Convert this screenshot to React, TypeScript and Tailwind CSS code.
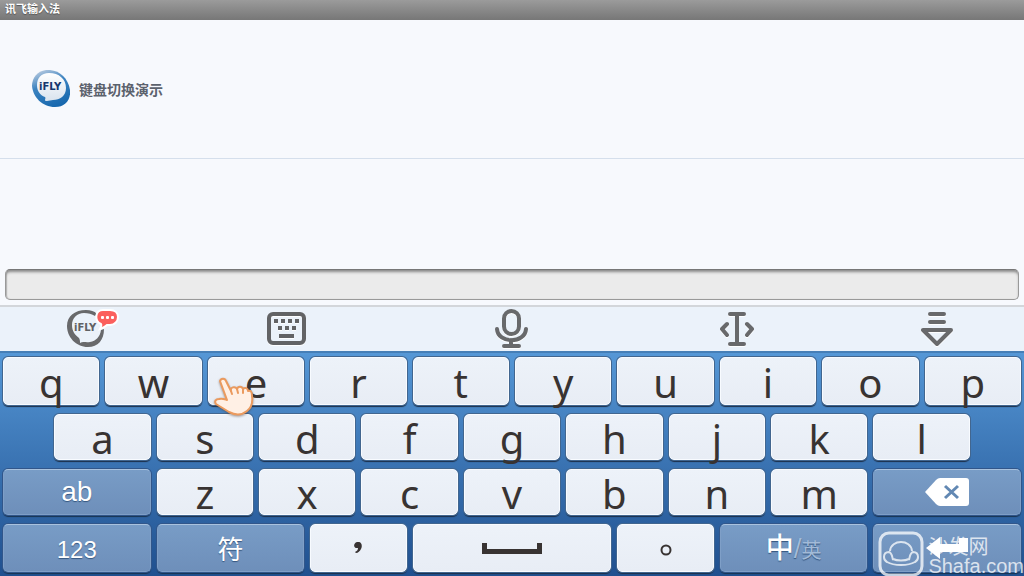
import type { ReactNode } from "react"
import clsx from "clsx"

const shadow = "drop-shadow-[0_1px_0_rgba(255,255,255,0.9)]"

function Key({
  label,
  span = "col-span-2",
  dark = false,
  children,
}: {
  label: string
  span?: string
  dark?: boolean
  children?: ReactNode
}) {
  return (
    <button
      type="button"
      aria-label={label}
      className={clsx(
        "flex h-full items-center justify-center rounded-[5px] border",
        span,
        dark
          ? "border-[#7f9fc7] border-t-[#a9c2de] bg-linear-to-b from-[#789cc6] to-[#6e8fba] text-white shadow-[0_0_0_1px_#31568a,0_2px_1px_#183352] [text-shadow:0_1px_1px_#35567f]"
          : "border-[#f8fbff] bg-linear-to-b from-[#edf2f9] to-[#e8edf5] text-[#383332] shadow-[0_0_0_1px_#42668f,0_2px_1px_#1b2f4a]",
      )}
    >
      {children ?? <span className="pt-1 font-['Noto_Sans',sans-serif] text-[40px] leading-10">{label}</span>}
    </button>
  )
}

function Letters({ value }: { value: string }) {
  return (
    <>
      {value.split("").map((char) => (
        <Key key={char} label={char} />
      ))}
    </>
  )
}

function AppLogo() {
  return (
    <svg width="38" height="38" viewBox="0 0 38 38" aria-hidden="true">
      <defs>
        <linearGradient id="ring" x1="0.2" y1="0" x2="0.6" y2="1">
          <stop offset="0" stopColor="#b9cbe0" />
          <stop offset="0.4" stopColor="#3c83c0" />
          <stop offset="1" stopColor="#1768ae" />
        </linearGradient>
        <linearGradient id="bubble" x1="0" y1="0" x2="0" y2="1">
          <stop offset="0" stopColor="#ffffff" />
          <stop offset="1" stopColor="#d9e3ee" />
        </linearGradient>
      </defs>
      <path d="M14 0C26-1 36 7 38 20c1 10-5 17-15 17C10 37 1 27 0 16 0 8 5 1 14 0Z" fill="url(#ring)" />
      <path
        d="M17 3c10 0 17 6 17 15 0 8-6 12-13 12l-6 1c-1 0-2 0-2-1 0-1 1-2 0-3C8 25 5 21 5 15 5 8 9 3 17 3Z"
        fill="url(#bubble)"
      />
      <text x="7" y="20" fontFamily="DejaVu Sans, sans-serif" fontSize="10" fontWeight="700" fill="#15366d">
        iFLY
      </text>
    </svg>
  )
}

function ToolLogo() {
  return (
    <svg width="66" height="40" viewBox="-12 0 66 40" aria-hidden="true">
      <path
        fillRule="evenodd"
        d="M20 1c5 0 8 1 11 4l-2 2C26 5 22 4 18 4 11 4 6 9 6 16c0 6 3 10 7 13 1 2 1 3 1 5 3-2 6 0 10-1 6-1 10-5 11-12l3-1c0 11-6 18-16 18C10 38 1 28 1 17 1 7 9 1 20 1Z"
        fill="#68696b"
      />
      <text x="8" y="22" fontFamily="DejaVu Sans, sans-serif" fontSize="10" fontWeight="700" fill="#606164">
        iFLY
      </text>
      <path
        d="M37 1h7c5 0 8 3 8 7s-3 8-8 8h-3c-2 2-4 3-7 4 1-2 2-4 1-5-7-3-6-14 2-14Z"
        fill="#fb605d"
        stroke="#fff"
        strokeWidth="2"
      />
      <g fill="#fff">
        <rect x="35" y="7" width="3" height="3" rx="1" />
        <rect x="40" y="7" width="3" height="3" rx="1" />
        <rect x="45" y="7" width="3" height="3" rx="1" />
      </g>
    </svg>
  )
}

function KeyboardIcon() {
  return (
    <svg width="40" height="34" viewBox="0 0 40 34" className={shadow} fill="#626365" aria-hidden="true">
      <rect x="3" y="2" width="35" height="29" rx="4" fill="none" stroke="#626365" strokeWidth="4" />
      <path d="M8 7h4v4H8zM15 7h4v4h-4zM22 7h4v4h-4zM29 7h4v4h-4zM12 14h4v4h-4zM19 14h4v4h-4zM26 14h4v4h-4zM13 22h15v4H13z" />
    </svg>
  )
}

function MicIcon() {
  return (
    <svg
      width="34"
      height="40"
      viewBox="0 0 34 40"
      className={shadow}
      fill="none"
      stroke="#68696b"
      strokeWidth="4"
      strokeLinecap="round"
      aria-hidden="true"
    >
      <rect x="10" y="2" width="15" height="23" rx="7.5" />
      <path d="M3 20c1 15 28 15 29 0M17 31v6M10 37h15" />
    </svg>
  )
}

function CursorIcon() {
  return (
    <svg
      width="36"
      height="36"
      viewBox="0 0 36 36"
      className={shadow}
      fill="none"
      stroke="#68696b"
      strokeWidth="4"
      strokeLinecap="round"
      strokeLinejoin="round"
      aria-hidden="true"
    >
      <path d="M11 3h14M11 33h14M18 3v30M8 13l-5 5 5 6M28 13l5 5-5 6" />
    </svg>
  )
}

function HideIcon() {
  return (
    <svg
      width="34"
      height="36"
      viewBox="0 0 34 36"
      className={shadow}
      fill="none"
      stroke="#68696b"
      strokeWidth="4"
      strokeLinecap="round"
      strokeLinejoin="round"
      aria-hidden="true"
    >
      <path d="M10 3h14M10 11h14M3 19h28L17 33Z" />
    </svg>
  )
}

const tools = [
  { name: "iFLY", icon: <ToolLogo /> },
  { name: "Keyboard layout", icon: <KeyboardIcon /> },
  { name: "Voice input", icon: <MicIcon /> },
  { name: "Move cursor", icon: <CursorIcon /> },
  { name: "Hide keyboard", icon: <HideIcon /> },
]

function Pointer() {
  return (
    <svg
      width="40"
      height="42"
      viewBox="0 0 40 42"
      className="pointer-events-none absolute top-6 left-[214px] drop-shadow-[0_1px_1px_rgba(80,60,50,0.5)]"
      aria-hidden="true"
    >
      <path
        d="M6 4c1-3 5-3 6 0l5 10c-1-4 4-5 6-2 1-3 5-3 6 0 2-2 5-1 5 2 3-1 4 1 4 5 1 7-1 12-5 15-6 5-12 4-18 1L2 27c-2-3 0-5 3-5 3-1 5 0 8 1Z"
        fill="#fff0e5"
        stroke="#eb9a5e"
        strokeWidth="2"
        strokeLinejoin="round"
      />
      <path d="m17 14 1 3M23 12l1 4M29 12v4" stroke="#eb9a5e" strokeWidth="2" strokeLinecap="round" />
    </svg>
  )
}

function Watermark() {
  return (
    <div className="pointer-events-none absolute right-0 bottom-0 flex items-end gap-1 text-white/75">
      <svg
        width="46"
        height="46"
        viewBox="0 0 46 46"
        fill="none"
        stroke="currentColor"
        strokeWidth="2"
        aria-hidden="true"
      >
        <rect x="2" y="3" width="42" height="42" rx="9" strokeWidth="3" />
        <path d="M12 21c1-12 21-12 22 0M15 30c-1-4-1-7-4-8-3 0-5 2-5 5 0 2 1 4 3 5 7 4 21 4 28 0 2-1 3-3 3-5 0-3-2-5-5-5-3 1-3 4-4 8M15 29c4 2 12 2 16 0" />
      </svg>
      <div className="flex flex-col">
        <span className="font-['Noto_Sans_CJK_SC',sans-serif] text-xl leading-5">沙发网</span>
        <span className="font-['Liberation_Sans',sans-serif] text-xl leading-5">Shafa.com</span>
      </div>
    </div>
  )
}

export default function App() {
  return (
    <div className="flex min-h-screen flex-col bg-[#f7f9fd] font-['Liberation_Sans','Noto_Sans_CJK_SC',sans-serif]">
      <header className="flex h-5 items-start bg-linear-to-b from-[#9b9b9b] to-[#777] px-[5px]">
        <h1 className="font-['Noto_Sans_CJK_SC',sans-serif] text-[11px] leading-4 font-bold text-white [text-shadow:0_1px_1px_#555]">
          讯飞输入法
        </h1>
      </header>

      <section className="flex h-[139px] items-center gap-[9px] border-b border-[#d5dfec] px-8">
        <AppLogo />
        <h2 className="font-['Noto_Sans_CJK_SC',sans-serif] text-sm font-bold text-[#5c626d]">键盘切换演示</h2>
      </section>

      <main className="flex grow flex-col justify-end px-[5px] pb-[5px]">
        <input
          type="text"
          aria-label="键盘切换演示"
          className="h-[31px] w-full rounded-[5px] border border-[#999] border-t-[#777] bg-[#ebebeb] px-2 shadow-[inset_0_3px_3px_-1px_#888,inset_1px_0_1px_#bbb] outline-none"
        />
      </main>

      <nav className="grid h-[46px] grid-cols-[174fr_224fr_226fr_226fr_174fr] border-t-2 border-[#d3d6da] bg-[#ebf2fa]">
        {tools.map((tool) => (
          <button key={tool.name} type="button" aria-label={tool.name} className="flex items-center justify-center">
            {tool.icon}
          </button>
        ))}
      </nav>

      <div className="relative grid grid-cols-20 grid-rows-[48px_46px_46px_48px] gap-x-1.5 gap-y-[9px] overflow-hidden border-t-2 border-[#467fb7] bg-linear-to-b from-[#5597d6] to-[#20508f] px-[3px] pt-1 pb-1">
        <Letters value="qwertyuiop" />

        <Key label="a" span="col-span-2 col-start-2" />
        <Letters value="sdfghjkl" />

        <Key label="ab" span="col-span-3 col-start-1" dark>
          <span className="text-[28px] leading-8">ab</span>
        </Key>
        <Letters value="zxcvbnm" />
        <Key label="Backspace" span="col-span-3" dark>
          <svg width="44" height="28" viewBox="0 0 44 28" aria-hidden="true">
            <path d="M0 14 11 2q2-2 4-2h26q3 0 3 3v22q0 3-3 3H15q-2 0-4-2Z" fill="#fff" />
            <path d="m20 8 13 12M33 8 20 20" stroke="#6288b3" strokeWidth="3" />
          </svg>
        </Key>

        <Key label="123" span="col-span-3" dark>
          <span className="pt-1 text-2xl">123</span>
        </Key>
        <Key label="符" span="col-span-3" dark>
          <span className="pt-1 text-[26px] leading-8">符</span>
        </Key>
        <Key label="，">
          <svg width="8" height="12" viewBox="0 0 8 12" fill="#383332" aria-hidden="true">
            <path d="M3 0c4-1 6 3 4 7-1 2-3 4-5 4l-1-1c2-1 3-2 3-4-5 1-5-5-1-6Z" />
          </svg>
        </Key>
        <Key label="Space" span="col-span-4">
          <svg width="60" height="11" viewBox="0 0 60 11" fill="#383332" aria-hidden="true">
            <path d="M0 0h5v6h50V0h5v11H0Z" />
          </svg>
        </Key>
        <Key label="。">
          <svg width="12" height="16" viewBox="0 0 12 16" aria-hidden="true">
            <circle cx="6" cy="10" r="4.5" fill="none" stroke="#383332" strokeWidth="2" />
          </svg>
        </Key>
        <Key label="中/英" span="col-span-3" dark>
          <span className="flex items-baseline pt-1">
            <span className="text-[28px] leading-8 font-medium">中</span>
            <span className="text-[28px] leading-8 text-[#a3bbd8]">/</span>
            <span className="text-xl leading-8 text-[#a3bbd8]">英</span>
          </span>
        </Key>
        <Key label="Enter" span="col-span-3" dark>
          <svg width="42" height="24" viewBox="0 0 42 24" fill="#fff" aria-hidden="true">
            <path d="M0 12 14 1v7h19V2h9v14H14v7Z" />
          </svg>
        </Key>

        <Pointer />
        <Watermark />
      </div>
    </div>
  )
}
